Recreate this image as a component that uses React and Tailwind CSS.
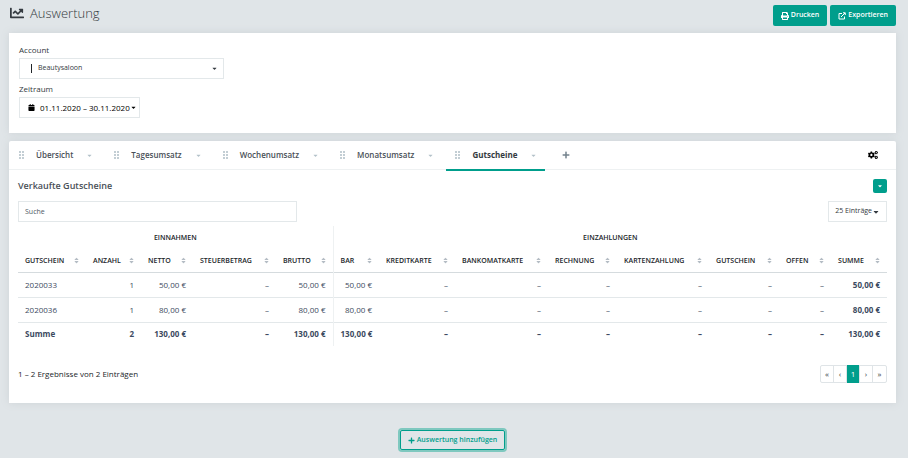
import { useState } from "react";
import { FaCalendar, FaCaretDown, FaChartLine, FaCogs, FaExternalLinkAlt, FaPlus, FaPrint, FaSort } from "react-icons/fa";

const tabs = ["Übersicht", "Tagesumsatz", "Wochenumsatz", "Monatsumsatz", "Gutscheine"];

const columns = [
  { name: "Gutschein", width: "w-[68px]" },
  { name: "Anzahl", width: "w-[55px]" },
  { name: "Netto", width: "w-[52px]" },
  { name: "Steuerbetrag", width: "w-[83px]" },
  { name: "Brutto", width: "w-[57px]" },
  { name: "Bar", width: "w-[46px]" },
  { name: "Kreditkarte", width: "w-[76px]" },
  { name: "Bankomatkarte", width: "w-[93px]" },
  { name: "Rechnung", width: "w-[69px]" },
  { name: "Kartenzahlung", width: "w-[92px]" },
  { name: "Gutschein", width: "w-[70px]" },
  { name: "Offen", width: "w-[52px]" },
  { name: "Summe", width: "w-[56px]" },
];

const rows = [
  ["2020033", "1", "50,00 €", "–", "50,00 €", "50,00 €", "–", "–", "–", "–", "–", "–", "50,00 €"],
  ["2020036", "1", "80,00 €", "–", "80,00 €", "80,00 €", "–", "–", "–", "–", "–", "–", "80,00 €"],
];

const total = ["Summe", "2", "130,00 €", "–", "130,00 €", "130,00 €", "–", "–", "–", "–", "–", "–", "130,00 €"];

function Grip() {
  return (
    <svg width="6" height="8" viewBox="0 0 6 8" fill="#c3ced4" aria-hidden="true">
      <path d="M0 0h2v2H0zM3 0h2v2H3zM0 3h2v2H0zM3 3h2v2H3zM0 6h2v2H0zM3 6h2v2H3z" />
    </svg>
  );
}

function Filter() {
  return (
    <section className="flex h-[100px] flex-col items-start bg-white px-[10px] pt-[11px] shadow-[0_0_8px_#cdd3d7]">
      <label htmlFor="account" className="text-[8px] leading-3">
        Account
      </label>
      <div className="mt-[2px] flex h-[21px] w-[205px] items-center border border-[#e3e8ea] pl-[11px]">
        <span className="h-[9px] w-px bg-[#212529]" />
        <select id="account" className="h-full flex-1 appearance-none pl-[6px] text-[7px]">
          <option>Beautysaloon</option>
        </select>
        <FaCaretDown className="pointer-events-none -ml-3 mr-[5px] size-[7px]" />
      </div>
      <label htmlFor="range" className="mt-1 text-[8px] leading-3">
        Zeitraum
      </label>
      <button
        id="range"
        className="mt-[2px] flex h-[21px] items-center border border-[#e3e8ea] pr-[2px] pl-2 text-[8px] text-black"
      >
        <FaCalendar className="mr-[5px] size-[7px]" />
        01.11.2020 – 30.11.2020
        <FaCaretDown className="size-[7px]" />
      </button>
    </section>
  );
}

function Tabs() {
  const [active, setActive] = useState("Gutscheine");

  return (
    <nav className="flex h-[29px] items-stretch border-b border-[#eef1f2] pl-px">
      {tabs.map((tab) => (
        <button
          key={tab}
          onClick={() => setActive(tab)}
          className={`-mb-[2px] mr-1 flex items-center border-b-2 pr-2 pl-[9px] text-[8px] ${
            tab === active ? "border-[#009e8c] font-bold" : "border-transparent font-semibold text-[#495057]"
          }`}
        >
          <Grip />
          <span className="mr-[13px] ml-[11px]">{tab}</span>
          <FaCaretDown className="size-[7px] text-[#b3c1c9]" />
        </button>
      ))}
      <button aria-label="Neuer Tab" className="ml-[13px] text-[#74838d]">
        <FaPlus className="size-2" />
      </button>
      <button aria-label="Einstellungen" className="mr-[18px] ml-auto text-black">
        <FaCogs className="size-[10px]" />
      </button>
    </nav>
  );
}

function VoucherTable() {
  const cell = (i) => `px-[7px] ${i === 0 ? "text-left" : "text-right"} ${i === 4 ? "border-r border-[#eef1f2]" : ""}`;

  return (
    <table className="mt-1 w-full table-fixed border-collapse text-[8px] leading-3 whitespace-nowrap text-[#3c4a60]">
      <colgroup>
        {columns.map((col, i) => (
          <col key={i} className={col.width} />
        ))}
      </colgroup>
      <thead className="text-[7px] text-[#212529] uppercase">
        <tr className="h-6">
          <th colSpan={5} className="border-r border-[#eef1f2] font-semibold">
            Einnahmen
          </th>
          <th colSpan={8} className="font-semibold">
            Einzahlungen
          </th>
        </tr>
        <tr className="h-[22px] border-b border-[#d5dbde]">
          {columns.map((col, i) => (
            <th key={i} className={`pr-[6px] pl-[7px] font-semibold ${i === 4 ? "border-r border-[#eef1f2]" : ""}`}>
              <button className="flex w-full items-center justify-between uppercase">
                {col.name}
                <FaSort className="size-[7px] text-[#b4bcc4]" />
              </button>
            </th>
          ))}
        </tr>
      </thead>
      <tbody>
        {rows.map((row) => (
          <tr key={row[0]} className="h-[25px] border-b border-[#e3e8ea]">
            {row.map((value, i) => (
              <td key={i} className={`${cell(i)} ${i === 12 ? "font-bold" : ""}`}>
                {value}
              </td>
            ))}
          </tr>
        ))}
      </tbody>
      <tfoot>
        <tr className="h-6 font-bold">
          {total.map((value, i) => (
            <td key={i} className={cell(i)}>
              {value}
            </td>
          ))}
        </tr>
      </tfoot>
    </table>
  );
}

function App() {
  return (
    <div className="min-h-screen bg-[#e0e5e8] pr-3 pb-[6px] pl-[9px] font-['Open_Sans',sans-serif] text-[#343a40]">
      <header className="flex h-[33px] items-start pt-[5px]">
        <h1 className="flex items-center text-[13px] leading-4 font-light">
          <FaChartLine className="mr-[6px] ml-px size-[14px]" />
          Auswertung
        </h1>
        <div className="ml-auto flex gap-[3px] text-[7px] font-semibold text-white">
          <button className="flex h-[21px] items-center gap-[2px] rounded-xs bg-[#009e8c] px-2">
            <FaPrint className="size-2" />
            Drucken
          </button>
          <button className="flex h-[21px] items-center gap-[2px] rounded-xs bg-[#009e8c] px-2">
            <svg viewBox="0 0 16 16" fill="none" stroke="currentColor" strokeWidth="2" className="size-2" aria-hidden="true">
              <path d="M8 3H2v11h11V9M6 10l8-8M10 1.500h4.500V6" />
            </svg>
            Exportieren
          </button>
        </div>
      </header>

      <Filter />

      <main className="mt-2 rounded-t-xs bg-white pb-5 shadow-[0_0_8px_#cdd3d7]">
        <Tabs />
        <div className="px-[9px] pt-[9px]">
          <div className="flex items-center justify-between">
            <h2 className="text-[9px] font-semibold text-[#495057]">Verkaufte Gutscheine</h2>
            <button aria-label="Aktionen" className="flex size-[14px] items-center justify-center rounded-xs bg-[#009e8c] text-white">
              <FaCaretDown className="size-[6px]" />
            </button>
          </div>
          <div className="mt-2 flex justify-between">
            <input
              type="search"
              aria-label="Suche"
              placeholder="Suche"
              className="h-[21px] w-[279px] border border-[#e3e8ea] px-[6px] text-[7px] placeholder:text-[#4d5964]"
            />
            <button className="flex h-[21px] items-center border border-[#e3e8ea] px-[6px] text-[7px]">
              25 Einträge
              <FaCaretDown className="size-2" />
            </button>
          </div>
          <VoucherTable />
          <div className="mt-[19px] flex items-center justify-between">
            <p className="text-[8px] text-[#212529]">1 – 2 Ergebnisse von 2 Einträgen</p>
            <div className="flex h-[18px] divide-x divide-[#dfe4e7] rounded-xs border border-[#dfe4e7] text-[8px]">
              <button className="w-[13px]">«</button>
              <button className="w-[13px]">‹</button>
              <button className="-my-px w-[13px] bg-[#009e8c] text-white">1</button>
              <button className="w-[13px]">›</button>
              <button className="w-[13px]">»</button>
            </div>
          </div>
        </div>
      </main>

      <div className="mt-[27px] flex justify-center">
        <button className="flex h-5 items-center gap-[2px] rounded-xs border border-[#009e8c] px-[7px] text-[7px] font-semibold text-[#009e8c] ring-2 ring-[#7fc8bf]">
          <FaPlus className="size-[7px]" />
          Auswertung hinzufügen
        </button>
      </div>
    </div>
  );
}

export default App;
